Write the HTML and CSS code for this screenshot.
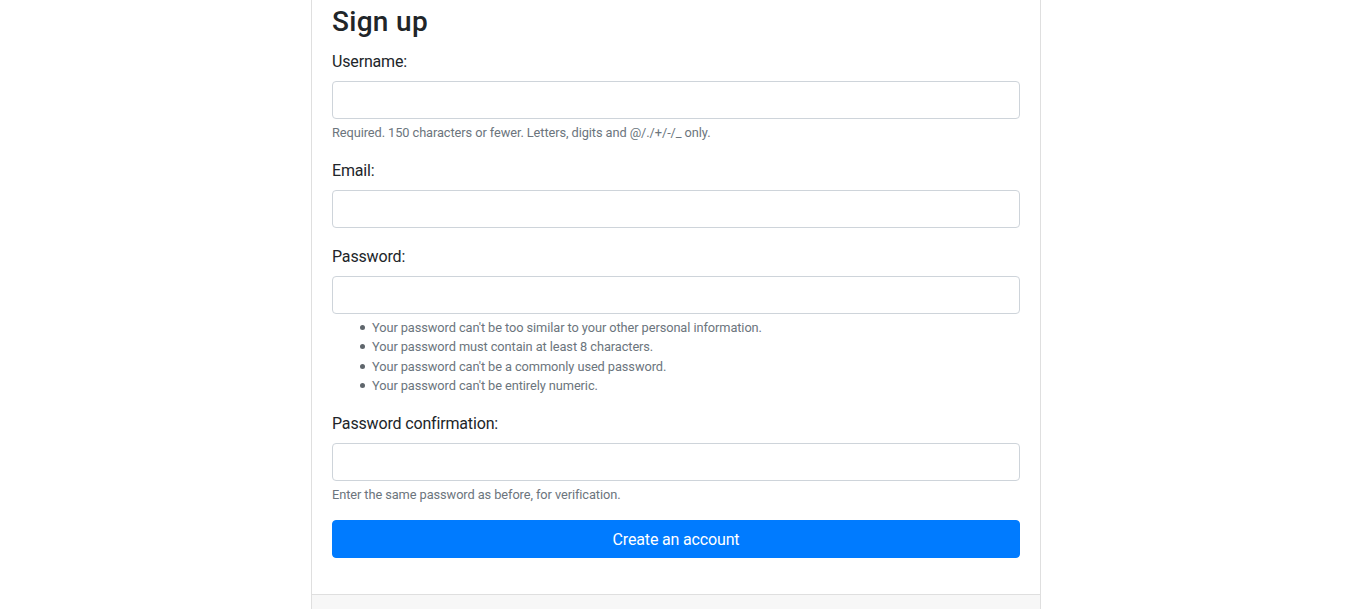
FILE: index.html
```html
<!DOCTYPE html>
<html lang="en">
<head>
<meta charset="utf-8">
<title>Sign up</title>
<link rel="stylesheet" href="styles.css">
</head>
<body>
<main class="page">
  <div class="card">
    <div class="card-body">
      <h2 class="title">Sign up</h2>
      <form class="form">
        <div class="form-group">
          <label class="label" for="id_username">Username:</label>
          <input class="input" type="text" id="id_username">
          <small class="form-text">Required. 150 characters or fewer. Letters, digits and @/./+/-/_ only.</small>
        </div>
        <div class="form-group">
          <label class="label" for="id_email">Email:</label>
          <input class="input" type="email" id="id_email">
        </div>
        <div class="form-group">
          <label class="label" for="id_password1">Password:</label>
          <input class="input" type="password" id="id_password1">
          <small class="form-text">
            <ul class="help-list">
              <li>Your password can't be too similar to your other personal information.</li>
              <li>Your password must contain at least 8 characters.</li>
              <li>Your password can't be a commonly used password.</li>
              <li>Your password can't be entirely numeric.</li>
            </ul>
          </small>
        </div>
        <div class="form-group">
          <label class="label" for="id_password2">Password confirmation:</label>
          <input class="input" type="password" id="id_password2">
          <small class="form-text">Enter the same password as before, for verification.</small>
        </div>
        <button class="btn" type="submit">Create an account</button>
      </form>
    </div>
    <div class="card-footer"></div>
  </div>
</main>
</body>
</html>
```

FILE: styles.css
```css
* { box-sizing: border-box; }
html, body {
  margin: 0;
  padding: 0;
  background: #fff;
}
body {
  font-family: Roboto, "Liberation Sans", sans-serif;
  font-size: 16px;
  line-height: 1.5;
  letter-spacing: -0.01em;
  color: #212529;
}
.page {
  padding-left: 311px;
}
.card {
  width: 730px;
  margin-top: -16px;
  border: 1px solid #dfdfdf;
  border-radius: 4px;
  background: #fff;
}
.card-body {
  padding: 20px;
}
.title {
  margin: 0 0 10.4px;
  font-size: 28px;
  font-weight: 500;
  line-height: 1.2;
  letter-spacing: 0.3px;
}
.form {
  margin: 0 0 16px;
}
.form-group {
  margin-bottom: 16px;
}
.label {
  display: inline-block;
  padding-top: 1px;
  margin-bottom: 7px;
}
.input {
  display: block;
  width: 100%;
  height: 38px;
  padding: 6px 12px;
  font: inherit;
  color: #495057;
  background: #fff;
  border: 1px solid #ced4da;
  border-radius: 4px;
}
.form-text {
  display: block;
  margin-top: 4px;
  font-size: 12.8px;
  letter-spacing: -0.08px;
  color: #6c757d;
}
.help-list {
  margin: 0 0 16px;
  padding-left: 40px;
  list-style: none;
}
.help-list li::before {
  content: "";
  display: inline-block;
  width: 5px;
  height: 5px;
  margin-left: -12.5px;
  margin-right: 7.5px;
  border-radius: 50%;
  background: #5f666c;
  vertical-align: 2px;
}
.btn {
  display: block;
  width: 100%;
  height: 38px;
  padding: 7px 12px 5px;
  font: inherit;
  letter-spacing: -0.01em;
  color: #fff;
  background: #007bff;
  border: 1px solid #007bff;
  border-radius: 4px;
  cursor: pointer;
}
.card-footer {
  height: 60px;
  background: #f7f7f7;
  border-top: 1px solid #dfdfdf;
}
```
